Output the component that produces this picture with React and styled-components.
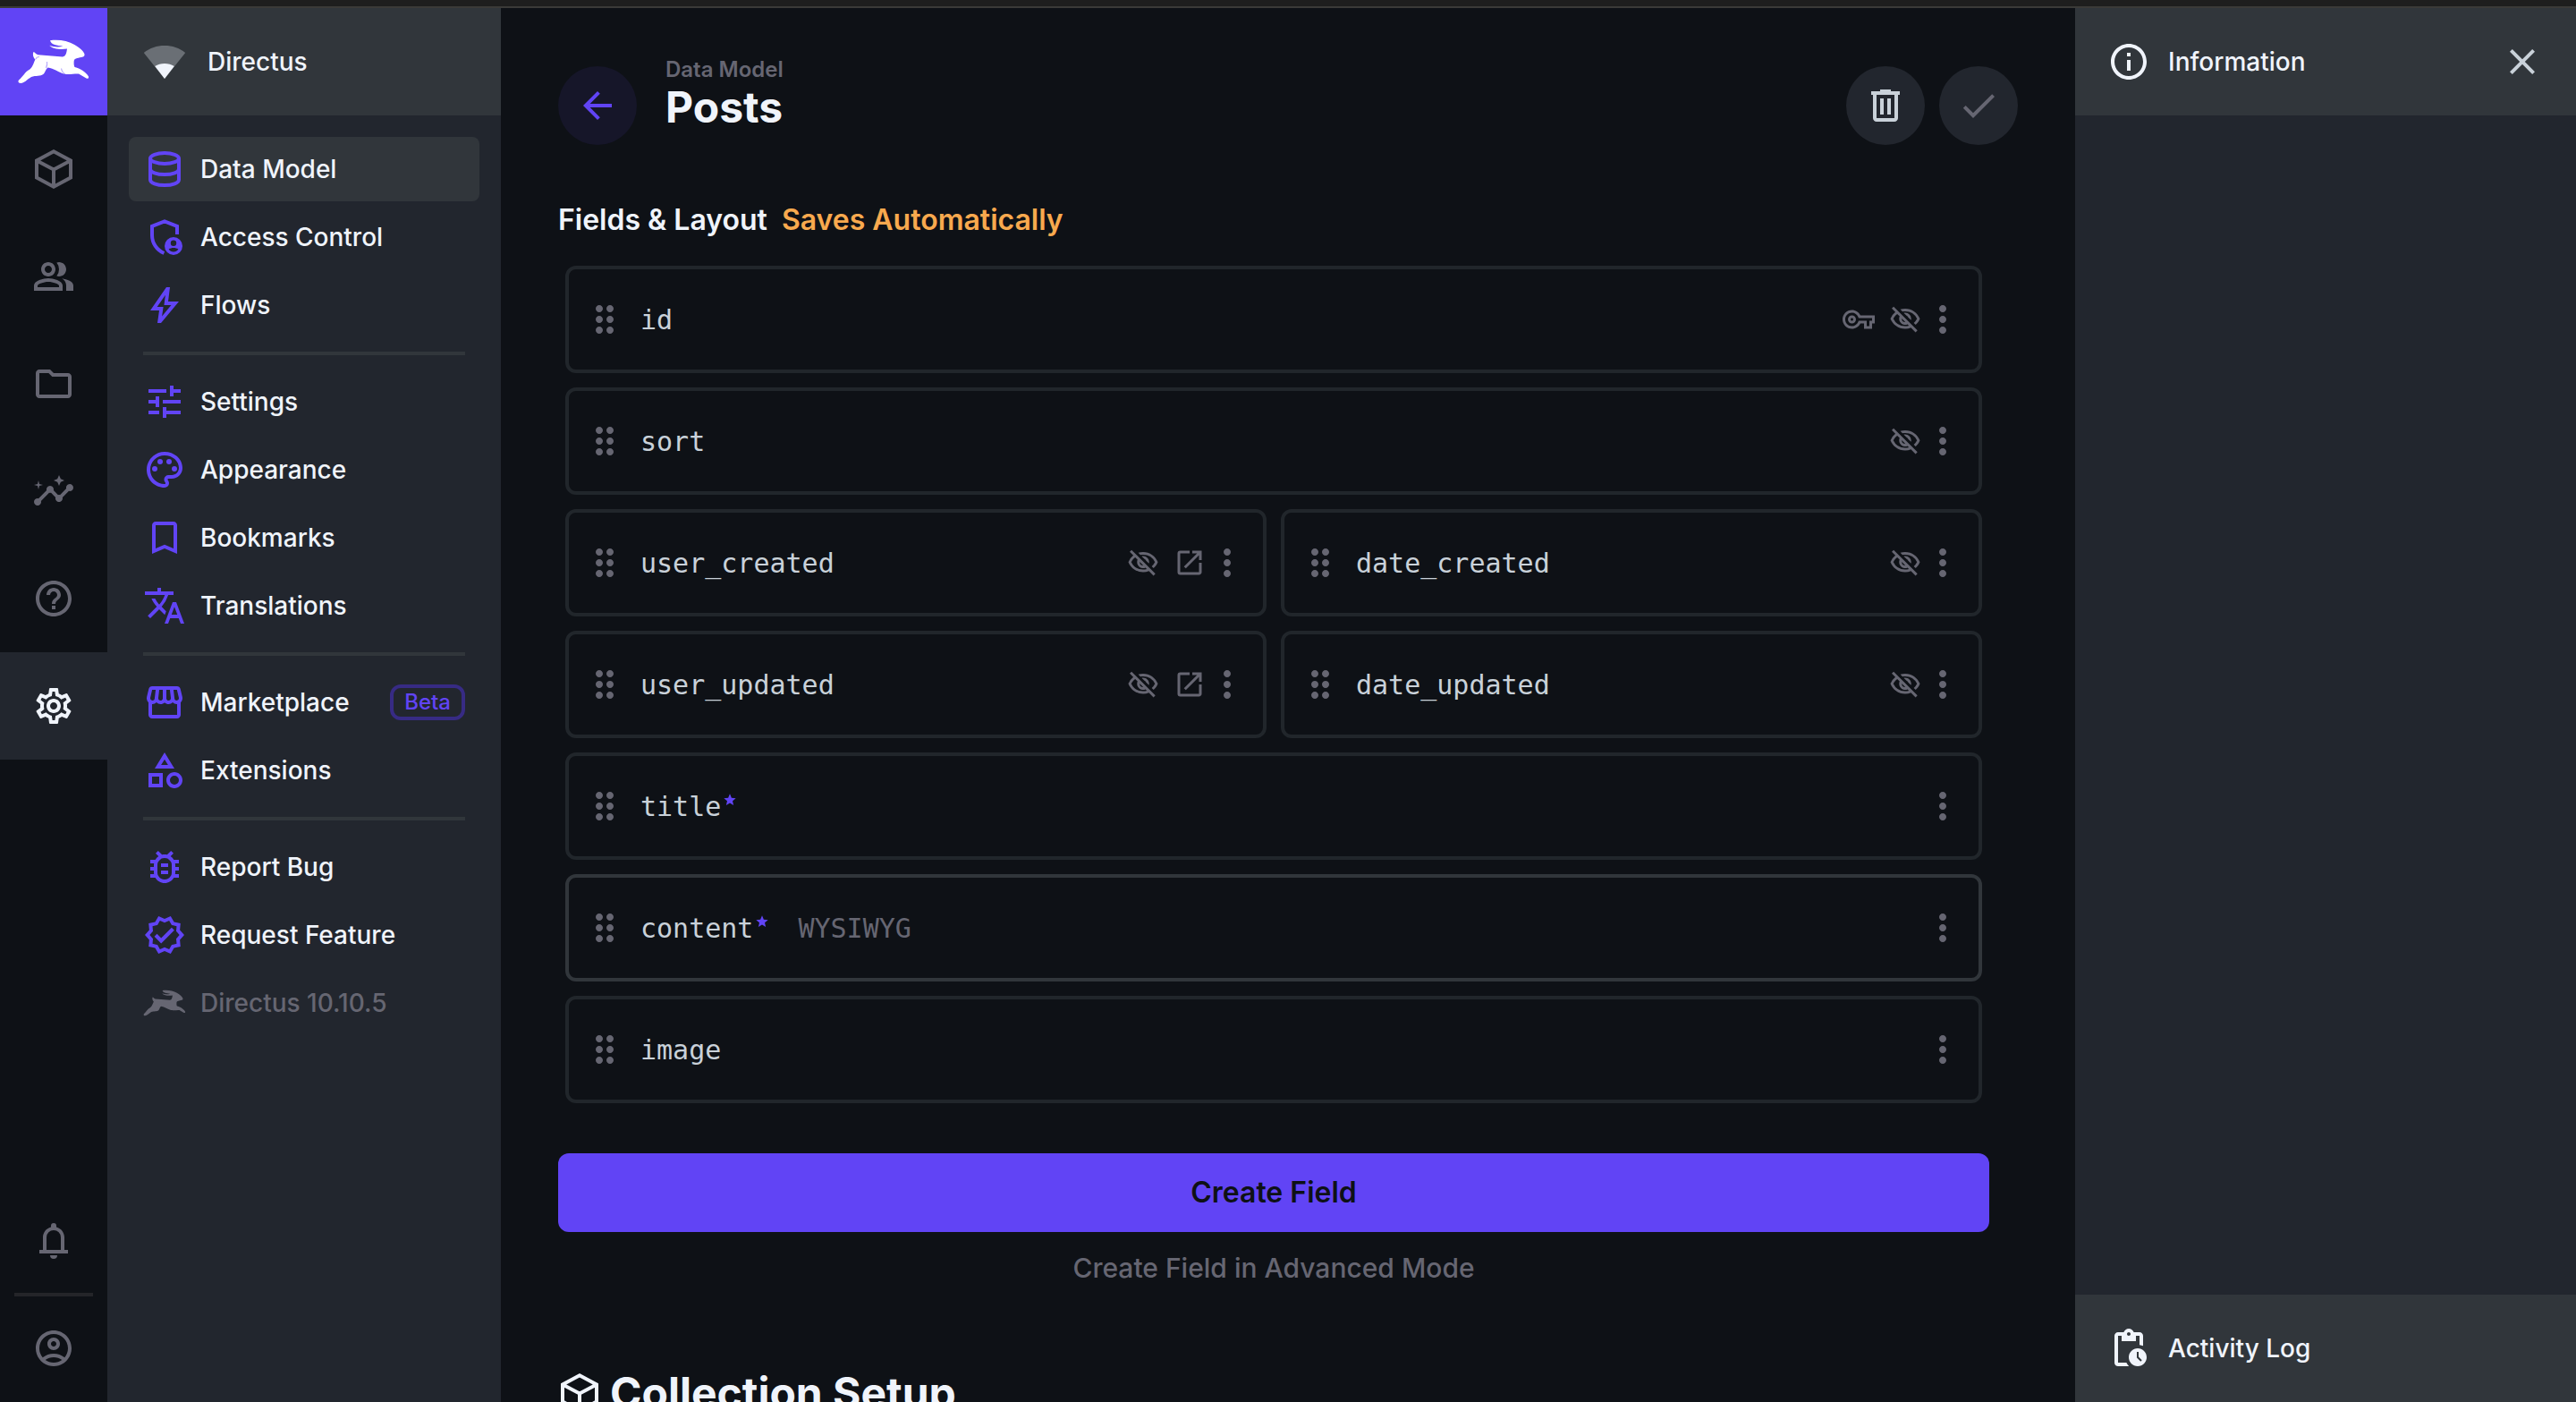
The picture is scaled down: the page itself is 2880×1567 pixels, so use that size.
import React from 'react';
import styled, { createGlobalStyle } from 'styled-components';
import {
  MdOutlinePeopleAlt, MdOutlineFolder, MdInsights, MdHelpOutline, MdOutlineSettings,
  MdTune, MdOutlinePalette, MdBookmarkBorder, MdTranslate,
  MdOutlineStorefront, MdOutlineCategory, MdOutlineBugReport, MdOutlineVerified,
  MdOutlineAccountCircle, MdArrowBack, MdCheck, MdOutlineVpnKey, MdOutlineVisibilityOff,
  MdOpenInNew, MdMoreVert, MdDragIndicator, MdInfoOutline, MdClose, MdPendingActions, MdStar,
} from 'react-icons/md';

const c = {
  page: '#0e1116', panel: '#22262e', raised: '#31363b', line: '#21262b', lineStrong: '#31363b',
  purple: '#6144f5', subdued: '#666672', text: '#c9d1d9', bright: '#f0f4fb', warning: '#f8a94e',
};

const Global = createGlobalStyle`
  *, *::before, *::after { box-sizing: border-box; }
  body { margin: 0; background: ${c.page}; color: ${c.bright};
    font: 500 28px/44px Inter, "Liberation Sans", sans-serif; -webkit-font-smoothing: antialiased; }
  button { font: inherit; color: inherit; border: 0; padding: 0; background: none; cursor: pointer; }
  a { color: inherit; text-decoration: none; }
  h1, h2, ul { margin: 0; padding: 0; }
  ul { list-style: none; }
  svg { display: block; flex: none; }
`;

const Page = styled.div`
  display: flex; flex-direction: column; height: 100vh; overflow: hidden;
`;
const WindowEdge = styled.div`
  flex: none; height: 9px; background: #1e1e1e; border-bottom: 2px solid #3b3a38;
`;
const Shell = styled.div`
  flex: 1; min-height: 0; display: grid; grid-template-columns: 120px 440px minmax(0, 1fr) 560px;
`;

const ModuleBar = styled.nav`
  display: flex; flex-direction: column; background: ${c.page};
`;
const ModuleLink = styled.a`
  display: flex; align-items: center; justify-content: center; height: 120px;
  font-size: 48px;
  color: ${p => (p.$active ? c.bright : c.subdued)};
  background: ${p => (p.$logo ? c.purple : p.$active ? c.panel : 'transparent')};
  ${p => p.$logo && 'color: #fff;'}
`;
const Spacer = styled.div`flex: 1;`;
const ModuleRule = styled.hr`
  width: 88px; height: 4px; margin: -2px auto; border: 0; background: #242529;
`;

const Navigation = styled.nav`background: ${c.panel};`;
const PanelHeader = styled.div`
  display: flex; align-items: center; height: 120px; padding: 0 40px; gap: 24px;
  background: ${c.raised};
`;
const NavList = styled.ul`
  display: flex; flex-direction: column; gap: 4px; padding: 24px;
`;
const NavRule = styled.li`
  height: 4px; margin: 12px 16px; background: ${c.raised};
`;
const NavLink = styled.a`
  display: flex; align-items: center; gap: 16px; height: 72px; padding: 0 16px; border-radius: 8px;
  background: ${p => (p.$active ? c.raised : 'transparent')};
  color: ${p => (p.$muted ? c.subdued : c.bright)};
  svg { font-size: 48px; color: ${p => (p.$muted ? c.subdued : c.purple)}; }
`;
const Beta = styled.span`
  margin-left: auto; height: 40px; padding: 0 12px; border: 4px solid #372b84; border-radius: 12px;
  color: ${c.purple}; font-size: 24px; line-height: 32px;
`;

const Main = styled.main`padding: 0 64px; overflow: hidden;`;
const Header = styled.header`
  display: flex; align-items: center; gap: 32px; height: 88px; margin-top: 65px;
`;
const Round = styled.button`
  display: flex; align-items: center; justify-content: center; width: 88px; height: 88px;
  border-radius: 50%; font-size: 48px;
  background: ${p => (p.$accent ? '#161629' : c.panel)};
  color: ${p => (p.$accent ? c.purple : p.disabled ? c.subdued : c.text)};
`;
const Titles = styled.div`flex: 1; display: flex; flex-direction: column; height: 88px;`;
const Crumb = styled.a`
  margin-top: -14px; color: ${c.subdued}; font-size: 24px; line-height: 36px; font-weight: 600;
`;
const Title = styled.h1`font-size: 48px; line-height: 48px; font-weight: 700;`;
const Actions = styled.div`display: flex; gap: 16px;`;

const Content = styled.div`max-width: 1600px;`;
const SectionLabel = styled.h2`
  display: flex; gap: 16px; margin: 60px 0 28px; font-size: 32px; line-height: 47px; font-weight: 600;
`;
const Notice = styled.span`color: ${c.warning};`;
const Fields = styled.ul`
  display: grid; grid-template-columns: 1fr 1fr; gap: 16px; margin: 0 8px;
`;
const Field = styled.li`
  grid-column: ${p => (p.$half ? 'auto' : '1 / -1')};
  display: flex; align-items: center; height: 120px; padding: 0 32px 0 16px;
  border: 4px solid ${p => (p.$hover ? c.lineStrong : c.line)}; border-radius: 12px;
  color: ${c.subdued}; font-family: "DejaVu Sans Mono", monospace; font-size: 30px; font-weight: 400;
`;
const Handle = styled.button`color: ${c.subdued}; font-size: 48px; margin-right: 16px;`;
const Name = styled.span`display: flex; padding-top: 2px; color: ${c.text};`;
const Required = styled.span`color: ${c.purple}; font-size: 16px; margin: 6px 0 0 2px;`;
const Kind = styled.span`margin-left: 32px; padding-top: 2px;`;
const FieldIcons = styled.div`
  display: flex; align-items: center; gap: 16px; margin-left: auto; font-size: 36px;
`;
const More = styled.button`display: flex; justify-content: center; width: 16px; font-size: 48px;`;

const CreateButton = styled.button`
  display: block; width: 100%; height: 88px; margin-top: 56px; border-radius: 12px;
  background: ${c.purple}; color: ${c.page}; font-size: 32px; font-weight: 600;
`;
const AdvancedButton = styled.button`
  display: block; margin: 16px auto 0; color: ${c.subdued}; font-size: 30px; line-height: 48px;
`;
const SetupTitle = styled.h2`
  display: flex; align-items: center; gap: 10px; margin-top: 84px;
  font-size: 48px; line-height: 64px; font-weight: 700;
`;

const Sidebar = styled.aside`
  display: flex; flex-direction: column; justify-content: space-between; background: ${c.panel};
`;
const SidebarButton = styled.button`
  flex: 1; display: flex; align-items: center; gap: 20px; text-align: left;
  svg { font-size: 48px; }
`;
const CloseButton = styled.button`color: ${c.text}; font-size: 48px;`;
const SidebarHeader = styled(PanelHeader)`padding: 0 36px;`;

const Svg = ({ children, box = '0 0 24 24', w = '1em', h = '1em' }) => (
  <svg viewBox={box} width={w} height={h} fill="currentColor" aria-hidden="true">{children}</svg>
);
const Stroke = ({ d }) => <path d={d} fill="none" stroke="currentColor" strokeWidth="2" />;

const Cube = () => <Svg><Stroke d="M12 2.1 21.500 7.200V16.800L12 21.900 2.500 16.800V7.200ZM2.500 7.200 12 12.300 21.500 7.200M12 12.300V21.900" /></Svg>;
const Database = () => (
  <Svg>
    <ellipse cx="12" cy="6" rx="8" ry="3" fill="none" stroke="currentColor" strokeWidth="2" />
    <Stroke d="M4 6V18C4 19.7 7.6 21 12 21S20 19.7 20 18V6M4 12C4 13.7 7.6 15 12 15S20 13.7 20 12" />
  </Svg>
);
const ShieldPerson = () => (
  <Svg>
    <Stroke d="M19 10.500V5.900L12 3.200 5 5.900V11C5 15.300 7.600 19.300 11.700 21" />
    <path fillRule="evenodd" d="M17 12a5 5 0 1 1 0 10 5 5 0 0 1 0-10ZM17 13.800a1.600 1.600 0 1 0 0 3.200 1.600 1.600 0 0 0 0-3.200ZM14.300 18.700C14.900 19.600 15.900 20.200 17 20.200S19.100 19.600 19.700 18.700C18.900 18.300 18 18 17 18S15.100 18.300 14.300 18.700Z" />
  </Svg>
);
const Bolt = () => (
  <Svg box="0 -960 960 960">
    <path d="m422-232 207-248H469l29-227-185 267h139l-30 208ZM320-80l40-280H160l360-520h80l-40 320h240L400-80h-80Z" />
  </Svg>
);
const Bell = () => (
  <Svg>
    <path d="M4 19V17H6V10C6 7.3 7.8 4.9 10.5 4.2V3.5a1.5 1.5 0 0 1 3 0v.7C16.2 4.9 18 7.3 18 10v7h2v2ZM8 17h8v-7a4 4 0 0 0-8 0ZM12 22a2 2 0 0 1-2-2h4a2 2 0 0 1-2 2Z" />
  </Svg>
);
const Trash = () => (
  <Svg>
    <path fillRule="evenodd" d="M7 21c-1.1 0-2-.9-2-2V6H4V4h5V3h6v1h5v2h-1v13c0 1.1-.9 2-2 2ZM17 6H7v13h10ZM9 8h2v9H9ZM13 8h2v9h-2Z" />
  </Svg>
);
const Wedge = () => (
  <Svg w={48} h={48}>
    <path d="M12 21.500.400 7C3.800 4.300 7.700 3 12 3S20.200 4.300 23.600 7Z" opacity=".3" />
    <path d="M12 21.500 6.600 14.500C8.200 13.500 10 13 12 13S15.800 13.500 17.400 14.500Z" />
  </Svg>
);
const Rabbit = ({ w, h, detailed }) => (
  <Svg box="0 0 80 54" w={w} h={h}>
    <path d="M36 3.300C45 2 56 3.500 63.300 8C69 11 73 15 74.300 18C75 20 74 21.300 72.700 21.500C68 23 63.500 22.500 62.700 26C62.500 29 62.500 31 63.500 33C68 34 76 38 79 43.500C79.500 45.500 78 46.200 76.500 45.500L68 40.500C64 40 58 41.500 52 40.700C46 39 40 34.500 33.500 33.500C31 35 31 38 29 40.500C25 44 20 42 15 44C10 47 7 51 3.300 51C.500 51-.200 49 1 47.500C6 43.500 7.500 38.500 13.300 35.500C17 32.500 17.500 28 19.500 24.500C17.500 22.500 16 19 17.500 16C19 16.500 20 18.500 22.500 19.300L50 21.500C54 21 54.500 16 55 12.500C48 13.500 39 13 35.200 8.700C40 10.500 45 11 50.500 9.500C44 9 37 8 36 3.300Z" />
    {detailed && (
      <path d="M32.500 27C33 30 32.500 32 31.500 34M48.500 34.500C49 37.500 50.500 39.500 53 41M20 24C20.500 22.500 22 21.500 24 21.500" fill="none" stroke={c.purple} strokeWidth="1.200" opacity=".45" />
    )}
  </Svg>
);

const modules = [
  ['Content', Cube], ['Users', MdOutlinePeopleAlt], ['Files', MdOutlineFolder],
  ['Insights', MdInsights], ['Help', MdHelpOutline], ['Settings', MdOutlineSettings],
];
const navGroups = [
  [['Data Model', Database], ['Access Control', ShieldPerson], ['Flows', Bolt]],
  [['Settings', MdTune], ['Appearance', MdOutlinePalette], ['Bookmarks', MdBookmarkBorder], ['Translations', MdTranslate]],
  [['Marketplace', MdOutlineStorefront], ['Extensions', MdOutlineCategory]],
  [['Report Bug', MdOutlineBugReport], ['Request Feature', MdOutlineVerified]],
];
const fields = [
  { name: 'id', icons: ['key', 'hidden'] },
  { name: 'sort', icons: ['hidden'] },
  { name: 'user_created', half: true, icons: ['hidden', 'open'] },
  { name: 'date_created', half: true, icons: ['hidden'] },
  { name: 'user_updated', half: true, icons: ['hidden', 'open'] },
  { name: 'date_updated', half: true, icons: ['hidden'] },
  { name: 'title', required: true },
  { name: 'content', required: true, kind: 'WYSIWYG', hover: true },
  { name: 'image' },
];
const fieldIcons = { key: MdOutlineVpnKey, hidden: MdOutlineVisibilityOff, open: MdOpenInNew };

export default function App() {
  return (
    <Page>
      <Global />
      <WindowEdge />
      <Shell>
        <ModuleBar aria-label="Modules">
          <ModuleLink href="#" $logo aria-label="Home"><Rabbit w={80} h={54} detailed /></ModuleLink>
          {modules.map(([label, Icon]) => (
            <ModuleLink key={label} href="#" aria-label={label} $active={label === 'Settings'}><Icon /></ModuleLink>
          ))}
          <Spacer />
          <ModuleLink href="#" aria-label="Notifications"><Bell /></ModuleLink>
          <ModuleRule />
          <ModuleLink href="#" aria-label="Account"><MdOutlineAccountCircle /></ModuleLink>
        </ModuleBar>

        <Navigation aria-label="Settings">
          <PanelHeader><Wedge />Directus</PanelHeader>
          <NavList>
            {navGroups.map((group, i) => (
              <React.Fragment key={i}>
                {i > 0 && <NavRule role="separator" />}
                {group.map(([label, Icon]) => (
                  <li key={label}>
                    <NavLink href="#" $active={label === 'Data Model'}>
                      <Icon />{label}{label === 'Marketplace' && <Beta>Beta</Beta>}
                    </NavLink>
                  </li>
                ))}
              </React.Fragment>
            ))}
            <li><NavLink href="#" $muted><Rabbit w={48} h={32} />Directus 10.10.5</NavLink></li>
          </NavList>
        </Navigation>

        <Main>
          <Header>
            <Round $accent aria-label="Back"><MdArrowBack /></Round>
            <Titles>
              <Crumb href="#">Data Model</Crumb>
              <Title>Posts</Title>
            </Titles>
            <Actions>
              <Round aria-label="Delete"><Trash /></Round>
              <Round disabled aria-label="Save"><MdCheck /></Round>
            </Actions>
          </Header>
          <Content>
            <SectionLabel>Fields &amp; Layout <Notice>Saves Automatically</Notice></SectionLabel>
            <Fields>
              {fields.map(f => (
                <Field key={f.name} $half={f.half} $hover={f.hover}>
                  <Handle aria-label="Reorder"><MdDragIndicator /></Handle>
                  <Name>{f.name}{f.required && <Required><MdStar /></Required>}</Name>
                  {f.kind && <Kind>{f.kind}</Kind>}
                  <FieldIcons>
                    {(f.icons || []).map(k => { const Icon = fieldIcons[k]; return <Icon key={k} />; })}
                    <More aria-label="Options"><MdMoreVert /></More>
                  </FieldIcons>
                </Field>
              ))}
            </Fields>
            <CreateButton>Create Field</CreateButton>
            <AdvancedButton>Create Field in Advanced Mode</AdvancedButton>
            <SetupTitle><Cube />Collection Setup</SetupTitle>
          </Content>
        </Main>

        <Sidebar>
          <SidebarHeader>
            <SidebarButton><MdInfoOutline />Information</SidebarButton>
            <CloseButton aria-label="Close"><MdClose /></CloseButton>
          </SidebarHeader>
          <SidebarHeader>
            <SidebarButton><MdPendingActions />Activity Log</SidebarButton>
          </SidebarHeader>
        </Sidebar>
      </Shell>
    </Page>
  );
}
